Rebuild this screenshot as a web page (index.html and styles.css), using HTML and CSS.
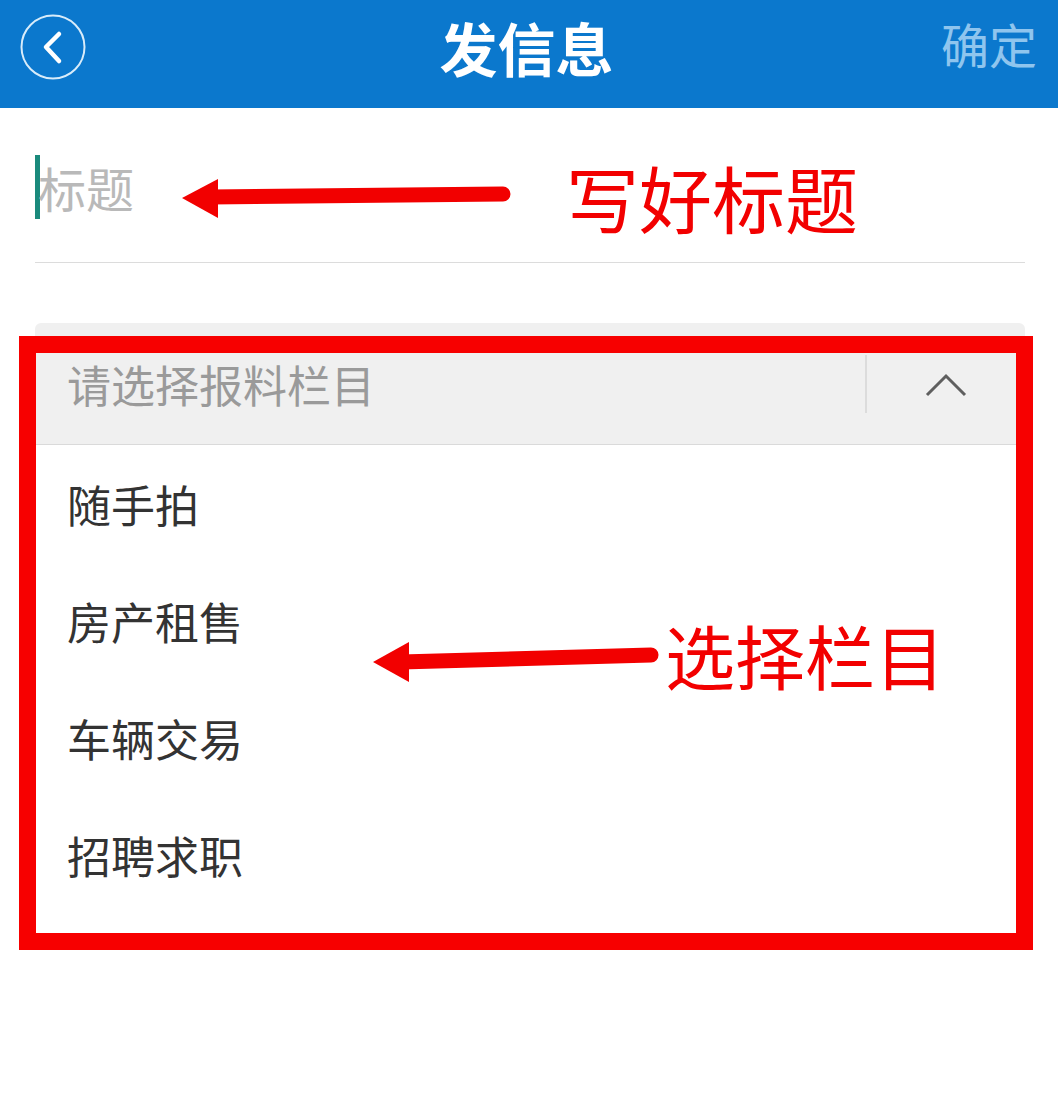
FILE: index.html
```html
<!DOCTYPE html>
<html lang="zh-CN">
<head>
<meta charset="utf-8">
<title>发信息</title>
<link rel="stylesheet" href="styles.css">
</head>
<body>
<div class="page">
  <header class="topbar">
    <div class="back">
      <svg width="66" height="66" viewBox="0 0 66 66">
        <circle cx="33" cy="33" r="31.5" fill="none" stroke="#d8ecfa" stroke-width="2"/>
        <polyline points="39,20 26,33 39,47" fill="none" stroke="#ffffff" stroke-width="4.5" stroke-linecap="round" stroke-linejoin="round"/>
      </svg>
    </div>
    <h1 class="title">发信息</h1>
    <div class="confirm">确定</div>
  </header>

  <main class="content">
    <div class="title-field">
      <span class="caret"></span>
      <span class="placeholder">标题</span>
    </div>

    <div class="select">
      <div class="select-head">
        <span class="select-text">请选择报料栏目</span>
        <span class="select-toggle">
          <svg width="42" height="26" viewBox="0 0 42 26">
            <polyline points="2,23 21,4 40,23" fill="none" stroke="#5f5f5f" stroke-width="3"/>
          </svg>
        </span>
      </div>
      <ul class="options">
        <li>随手拍</li>
        <li>房产租售</li>
        <li>车辆交易</li>
        <li>招聘求职</li>
      </ul>
    </div>
  </main>

  <!-- annotations -->
  <svg class="arrow arrow-1" width="340" height="50" viewBox="0 0 340 50">
    <line x1="30" y1="22" x2="323" y2="19" stroke="#f20000" stroke-width="15" stroke-linecap="round"/>
    <polygon points="2,23 38,4 38,43" fill="#f20000"/>
  </svg>
  <div class="note note-1">写好标题</div>

  <svg class="arrow arrow-2" width="300" height="50" viewBox="0 0 300 50">
    <line x1="30" y1="26" x2="280" y2="19" stroke="#f20000" stroke-width="15" stroke-linecap="round"/>
    <polygon points="2,26 38,6 38,46" fill="#f20000"/>
  </svg>
  <div class="note note-2">选择栏目</div>

  <div class="redbox"></div>
</div>
</body>
</html>
```

FILE: styles.css
```css
* { box-sizing: border-box; }
html, body {
  margin: 0;
  padding: 0;
  background: #ffffff;
}
body {
  font-family: "Noto Sans CJK SC", "Noto Sans", sans-serif;
}
.page {
  position: relative;
  width: 1058px;
  min-height: 1101px;
}
.topbar {
  height: 108px;
  background: #0b78cd;
  display: flex;
  align-items: center;
  justify-content: space-between;
  padding: 0 21px 14px 20px;
}
.back {
  width: 66px;
  height: 66px;
  display: flex;
}
.title {
  margin: 0;
  font-size: 58px;
  font-weight: 700;
  color: #ffffff;
  line-height: 1;
  padding-left: 26px;
  padding-top: 0;
}
.confirm {
  font-size: 48px;
  color: #8fc5ee;
  line-height: 1;
  margin-top: -8px;
}
.content {
  padding: 0 33px 0 35px;
}
.title-field {
  height: 155px;
  border-bottom: 1px solid #dcdcdc;
  display: flex;
  align-items: center;
  padding-top: 4px;
}
.caret {
  width: 5px;
  height: 64px;
  background: #1a8a7c;
}
.placeholder {
  font-size: 48px;
  color: #b9b9b9;
  line-height: 1;
  margin-left: -2px;
}
.select {
  margin-top: 60px;
  border-radius: 6px 6px 0 0;
  overflow: hidden;
}
.select-head {
  height: 122px;
  background: #f0f0f0;
  border-bottom: 1px solid #dadada;
  display: flex;
  align-items: center;
  justify-content: space-between;
}
.select-text {
  padding-left: 32px;
  font-size: 44px;
  color: #9a9a9a;
  line-height: 1;
}
.select-toggle {
  width: 160px;
  height: 58px;
  border-left: 2px solid #dcdcdc;
  display: flex;
  align-items: center;
  justify-content: center;
  padding-top: 2px;
}
.options {
  list-style: none;
  margin: 0;
  padding: 0 0 20px;
  background: #ffffff;
}
.options li {
  height: 117px;
  display: flex;
  align-items: center;
  padding-left: 32px;
  font-size: 44px;
  color: #333333;
  line-height: 1;
}
.arrow {
  position: absolute;
}
.arrow-1 {
  left: 180px;
  top: 175px;
}
.arrow-2 {
  left: 371px;
  top: 636px;
}
.note {
  position: absolute;
  color: #f20000;
  line-height: 1;
  white-space: nowrap;
}
.note-1 {
  left: 566px;
  top: 160px;
  font-size: 73px;
}
.note-2 {
  left: 665px;
  top: 620px;
  font-size: 70px;
}
.redbox {
  position: absolute;
  left: 19px;
  top: 336px;
  width: 1014px;
  height: 614px;
  border: 17px solid #f70000;
}
```
